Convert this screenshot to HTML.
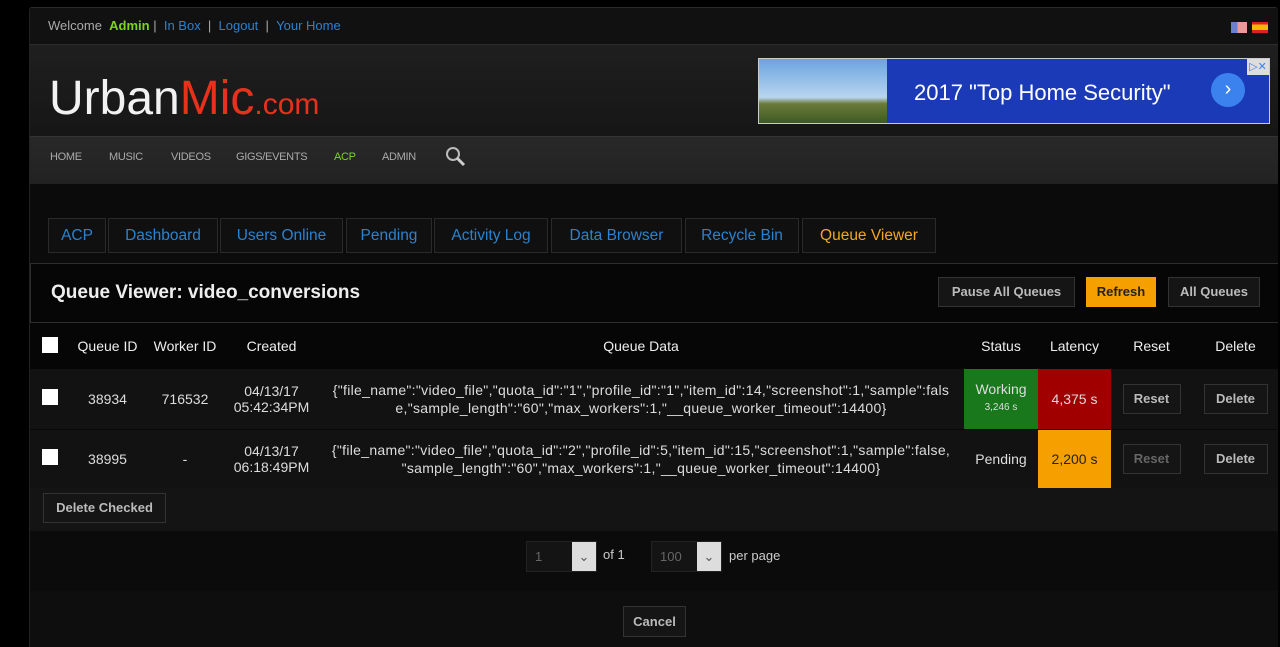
<!DOCTYPE html>
<html><head><meta charset="utf-8"><style>
*{margin:0;padding:0;box-sizing:border-box}
body{width:1280px;height:643px;background:#000;font-family:"Liberation Sans",sans-serif;position:relative;overflow:hidden;color:#ddd}
.abs{position:absolute}
#wrap{position:absolute;left:29px;top:7px;width:1249px;height:640px;background:#0b0b0b;border-left:1px solid #222;border-top:1px solid #2a2a2a;border-radius:3px 3px 0 0;overflow:hidden}
.top{position:absolute;left:0;top:0;width:100%;height:37px;background:#111;border-bottom:1px solid #2c2c2c;font-size:13px;line-height:36px;padding-left:18px;color:#aaa}
.top a{color:#2b82cf}.top b{color:#7ed321}
.hdr{position:absolute;left:0;top:37px;width:100%;height:91px;background:linear-gradient(#1f1f1f,#161616)}
.nav{position:absolute;left:0;top:128px;width:100%;height:48px;background:linear-gradient(#282828,#222);border-top:1px solid #333;font-size:11px;color:#aaa;line-height:40px;letter-spacing:-0.3px}
.nav span{position:absolute;top:0}
.tab{position:absolute;top:210px;height:35px;border:1px solid #2a2a2a;background:#101010;color:#2b82cf;font-size:15.5px;line-height:33px;text-align:center}
.panel{position:absolute;left:0;top:255px;width:1249px;height:60px;border:1px solid #2d2d2d;border-right:none;background:#060606}
.btn{position:absolute;border:1px solid #333;background:#151515;color:#bbb;font-size:13px;font-weight:bold;text-align:center}
td,th{font-size:14px;text-align:center;color:#ddd}
th{font-weight:normal;color:#eee}
.cb{display:inline-block;width:16px;height:16px;background:#fff}
</style></head><body>
<div id="wrap">
<div class="top">Welcome &nbsp;<b>Admin</b> | &nbsp;<a>In Box</a> &nbsp;| &nbsp;<a>Logout</a> &nbsp;| &nbsp;<a>Your Home</a>
<div class="abs" style="left:1201px;top:14px;width:16px;height:11px;background:linear-gradient(90deg,#6a7fd0 40%,#e99 40%)"></div>
<div class="abs" style="left:1222px;top:14px;width:16px;height:11px;background:linear-gradient(#d22 25%,#f5b800 25%,#f5b800 75%,#d22 75%)"></div>
</div>
<div class="hdr">
<div class="abs" style="left:19px;top:26px;font-size:48px;color:#f2f2f2;font-family:'Liberation Sans',sans-serif;letter-spacing:0px">Urban<span style="color:#e8311c">Mic</span><span style="color:#e8311c;font-size:30px">.com</span></div>
<div class="abs" style="left:728px;top:13px;width:512px;height:66px;border:1px solid #ccc;background:#1b3ab8">
<div class="abs" style="left:0;top:0;width:128px;height:64px;background:linear-gradient(#6aa4e0,#b9d5ee 60%,#6b7a3a 70%,#3d5a22)"></div>
<div class="abs" style="left:155px;top:21px;color:#fff;font-size:22px">2017 "Top Home Security"</div>
<div class="abs" style="left:452px;top:14px;width:34px;height:34px;border-radius:50%;background:#3b82ee;color:#fff;text-align:center;line-height:32px;font-size:20px">›</div>
<div class="abs" style="left:488px;top:0;width:22px;height:16px;background:#ddd;color:#3b82ee;font-size:11px;line-height:16px;text-align:center">▷✕</div>
</div></div>
<div class="nav"><span style="left:20px">HOME</span><span style="left:79px">MUSIC</span><span style="left:141px">VIDEOS</span><span style="left:206px">GIGS/EVENTS</span><span style="left:304px;color:#7ed321">ACP</span><span style="left:352px">ADMIN</span>
<svg class="abs" style="left:414px;top:8px" width="24" height="24"><circle cx="9" cy="9" r="6" stroke="#bbb" stroke-width="2" fill="none"/><line x1="13" y1="13" x2="20" y2="20" stroke="#ccc" stroke-width="3"/></svg></div>
<div class="tab" style="left:18px;width:58px">ACP</div>
<div class="tab" style="left:78px;width:110px">Dashboard</div>
<div class="tab" style="left:190px;width:123px">Users Online</div>
<div class="tab" style="left:316px;width:86px">Pending</div>
<div class="tab" style="left:404px;width:114px">Activity Log</div>
<div class="tab" style="left:521px;width:131px">Data Browser</div>
<div class="tab" style="left:655px;width:114px">Recycle Bin</div>
<div class="tab" style="left:772px;width:134px;color:#f5a623">Queue Viewer</div>
<div class="panel"><div class="abs" style="left:20px;top:18px;font-size:19px;font-weight:bold;color:#eee">Queue Viewer: video_conversions</div>
<div class="btn" style="left:907px;top:13px;width:137px;height:30px;line-height:28px">Pause All Queues</div>
<div class="btn" style="left:1055px;top:13px;width:70px;height:30px;line-height:28px;background:#f5a000;color:#222;border-color:#f5a000">Refresh</div>
<div class="btn" style="left:1137px;top:13px;width:92px;height:30px;line-height:28px">All Queues</div></div>
<table class="abs" style="left:0;top:315px;width:1249px;border-collapse:collapse">
<tr style="height:46px;background:#060606"><th style="width:40px"><span class="cb"></span></th><th style="width:75px">Queue ID</th><th style="width:80px">Worker ID</th><th style="width:93px">Created</th><th style="width:646px">Queue Data</th><th style="width:74px">Status</th><th style="width:73px">Latency</th><th style="width:81px">Reset</th><th>Delete</th></tr>
<tr style="height:60px;background:#121212;border-bottom:1px solid #080808"><td><span class="cb"></span></td><td>38934</td><td>716532</td><td>04/13/17<br>05:42:34PM</td><td style="line-height:18px;padding:0 6px;font-size:14px;letter-spacing:0.3px">{"file_name":"video_file","quota_id":"1","profile_id":"1","item_id":14,"screenshot":1,"sample":fals e,"sample_length":"60","max_workers":1,"__queue_worker_timeout":14400}</td><td style="background:#19781b;line-height:16px">Working<br><span style="font-size:10px">3,246 s</span></td><td style="background:#a00000">4,375 s</td><td><div class="btn" style="position:static;margin:auto;width:58px;height:30px;line-height:28px">Reset</div></td><td><div class="btn" style="position:static;margin:auto;width:64px;height:30px;line-height:28px">Delete</div></td></tr>
<tr style="height:59px;background:#121212"><td><span class="cb"></span></td><td>38995</td><td>-</td><td>04/13/17<br>06:18:49PM</td><td style="line-height:18px;padding:0 6px;font-size:14px;letter-spacing:0.3px">{"file_name":"video_file","quota_id":"2","profile_id":5,"item_id":15,"screenshot":1,"sample":false, "sample_length":"60","max_workers":1,"__queue_worker_timeout":14400}</td><td>Pending</td><td style="background:#f5a000;color:#222">2,200 s</td><td><div class="btn" style="position:static;margin:auto;width:58px;height:30px;line-height:28px;color:#666">Reset</div></td><td><div class="btn" style="position:static;margin:auto;width:64px;height:30px;line-height:28px">Delete</div></td></tr>
</table>
<div class="abs" style="left:0;top:480px;width:1249px;height:43px;background:#141414"></div>
<div class="btn" style="left:13px;top:485px;width:123px;height:30px;line-height:28px">Delete Checked</div>
<div class="abs" style="left:0;top:583px;width:1249px;height:60px;background:#0e0e0e"></div>
<div class="abs" style="left:496px;top:533px;width:71px;height:31px;border:1px solid #222;background:#141414;color:#666;font-size:13px;line-height:29px;padding-left:8px">1<div class="abs" style="right:0;top:0;width:24px;height:29px;background:#ddd;color:#555;text-align:center">⌄</div></div>
<div class="abs" style="left:573px;top:539px;font-size:13px;color:#ccc">of 1</div>
<div class="abs" style="left:621px;top:533px;width:71px;height:31px;border:1px solid #222;background:#141414;color:#666;font-size:13px;line-height:29px;padding-left:8px">100<div class="abs" style="right:0;top:0;width:24px;height:29px;background:#ddd;color:#555;text-align:center">⌄</div></div>
<div class="abs" style="left:699px;top:540px;font-size:13px;color:#ccc">per page</div>
<div class="btn" style="left:593px;top:598px;width:63px;height:31px;line-height:29px">Cancel</div>
</div>
</body></html>
